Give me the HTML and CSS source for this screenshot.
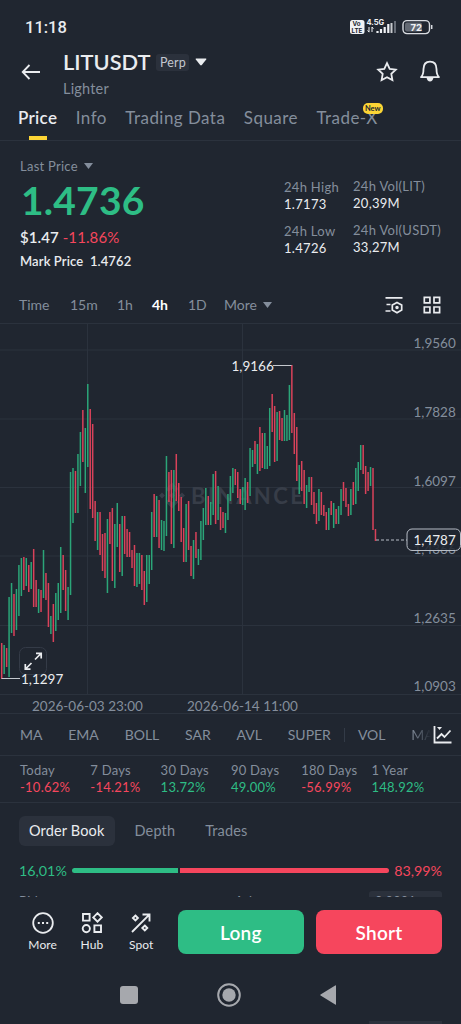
FILE: index.html
```
<!DOCTYPE html>
<html lang="en">
<head>
    <meta charset="UTF-8">
    <title>LITUSDT Perp</title>
    <link rel="stylesheet" href="styles.css">
</head>
<body>
<div class="phone">
    <div class="status">
        <span class="clock">11:18</span>
        <svg class="status-icons" width="86" height="18" viewBox="0 0 86 18">
            <rect x="1" y="2" width="14.500" height="14" rx="2.5" fill="#f0f2f5"/>
            <text x="3.600" y="8.3" class="volte">Vo</text>
            <text x="2.500" y="14.8" class="volte">LTE</text>
            <text x="17.500" y="7.4" class="net">4.5G</text>
            <path d="M20 9v5M18.6 12.4l1.4 1.8M23 14V9M24.4 10.8L23 9" stroke="#f0f2f5" stroke-width="1" fill="none"/>
            <path d="M28.5 15v-2M32 15v-4M35.700 15V9M39.300 15V6" stroke="#f0f2f5" stroke-width="2.200"/>
            <path d="M42.500 15V5" stroke="#f0f2f5" stroke-width="2" opacity=".8"/>
            <path d="M46 15V3" stroke="#666c76" stroke-width="2"/>
            <rect x="54" y="2.600" width="26.500" height="13" rx="4" fill="none" stroke="#d9dce1" stroke-width="1.400"/>
            <rect x="56" y="4.600" width="17" height="9" rx="2" fill="#636973"/>
            <path d="M82.700 7v4" stroke="#d9dce1" stroke-width="1.500"/>
            <text x="61.500" y="12.500" class="batt">72</text>
        </svg>
    </div>

    <div class="header">
        <svg class="back" width="20" height="18" viewBox="0 0 20 18"><path d="M19 9H2M8.500 2L1.700 9l6.800 7" fill="none" stroke="#eaecef" stroke-width="1.800"/></svg>
        <div class="pair">
            <div class="pair-top">
                <h1>LITUSDT</h1>
                <span class="perp">Perp</span>
                <svg width="12" height="8" viewBox="0 0 12 8"><path d="M1.200.5h9.600q1 0 .4.900L6.800 7q-.8.900-1.600 0L.8 1.400Q.2.500 1.200.5z" fill="#eaecef"/></svg>
            </div>
            <div class="pair-name">Lighter</div>
        </div>
        <svg class="star" width="22" height="22" viewBox="0 0 22 22"><path d="M11 2.100l2.700 5.700 6.100.8-4.500 4.300 1.100 6.200L11 16.200l-5.400 2.900 1.100-6.200L2.200 8.600l6.100-.8z" fill="none" stroke="#eaecef" stroke-width="1.800"/></svg>
        <svg class="bell" width="22" height="24" viewBox="0 0 22 24"><path d="M2 18.100h18c-2.400-2-2.500-4-2.500-8 0-4.800-2.500-7.500-6.500-7.500s-6.500 2.700-6.500 7.500c0 4-.1 6-2.500 8z" fill="none" stroke="#eaecef" stroke-width="1.800" stroke-linejoin="round"/><path d="M7.500 18.500q.8 3.900 3.500 3.900t3.500-3.900z" fill="#eaecef"/></svg>
    </div>

    <div class="tabs">
        <span class="current">Price</span>
        <span>Info</span>
        <span>Trading Data</span>
        <span>Square</span>
        <span>Trade-X<i>New</i></span>
    </div>

    <div class="summary">
        <div class="last">
            <div class="label">Last Price <svg width="9" height="6" viewBox="0 0 9 6"><path d="M0 0h9L4.500 6z" fill="#848e9c"/></svg></div>
            <div class="price">1.4736</div>
            <div class="change">$1.47 <span class="down">-11.86%</span></div>
            <div class="mark">Mark Price&nbsp; 1.4762</div>
        </div>
        <div class="stats">
            <div class="col">
                <div>24h High<b>1.7173</b></div>
                <div>24h Low<b>1.4726</b></div>
            </div>
            <div class="col second">
                <div>24h Vol(LIT)<b>20,39M</b></div>
                <div>24h Vol(USDT)<b>33,27M</b></div>
            </div>
        </div>
    </div>

    <div class="intervals">
        <span class="i-time">Time</span>
        <span class="i-15m">15m</span>
        <span class="i-1h">1h</span>
        <span class="i-4h current">4h</span>
        <span class="i-1d">1D</span>
        <span class="i-more">More <svg width="9" height="6" viewBox="0 0 9 6"><path d="M0 0h9L4.500 6z" fill="#848e9c"/></svg></span>
        <svg class="prefs" width="18" height="18" viewBox="0 0 18 18" fill="none" stroke="#eaecef" stroke-width="1.700"><path d="M.5 1.800h17M1.500 8.500h4M.5 15h5"/><path d="M12 6.500l4.700 2.600v5L12 16.700l-4.700-2.600v-5z"/><circle cx="12" cy="11.600" r=".9"/></svg>
        <svg class="grid" width="18" height="18" viewBox="0 0 18 18" fill="none" stroke="#eaecef" stroke-width="1.700"><path d="M1.300 1.300h5.600v5.600H1.300zM11 1.300h5.600v5.600H11zM1.300 11h5.600v5.600H1.300zM11 11h5.600v5.600H11z"/></svg>
    </div>

    <!-- viewBox starts at y=323, the top edge of the chart -->
    <svg id="chart" width="461" height="391" viewBox="0 323 461 391">
        <path class="line" d="M0 323.500h461M0 350h461M0 419h461M0 487.500h461M0 556h461M0 625.500h461M0 694.500h461M0 713.500h461M87.500 323v371M242.500 323v371"/>
        <g class="logo">
            <path d="M172 482.500l6.500 6.500-3 3-3.500-3.500-3.500 3.500-3-3zM162 492.500l3 3-3 3-3-3zM172 492.500l3 3-3 3-3-3zM182 492.500l3 3-3 3-3-3zM172 508.500l6.500-6.500-3-3-3.500 3.500-3.500-3.500-3 3z"/>
            <text x="191" y="504">BINANCE</text>
        </g>
        <g id="candles"></g>
        <g class="axis">
            <text x="413.500" y="347.500">1,9560</text>
            <text x="413.500" y="416.500">1,7828</text>
            <text x="413.500" y="485.500">1,6097</text>
            <text x="413.500" y="554">1,4366</text>
            <text x="413.500" y="623">1,2635</text>
            <text x="413.500" y="691">1,0903</text>
            <text x="32" y="710.500">2026-06-03 23:00</text>
            <text x="187" y="710.500">2026-06-14 11:00</text>
        </g>
        <rect x="19.500" y="647.500" width="27" height="27" rx="6" fill="#202630" stroke="#343b47"/>
        <path d="M35 659.500l6-6M36 653.300h5.200v5.200M31.500 663l-6 6M25.300 664v5.200h5.200" fill="none" stroke="#eaecef" stroke-width="1.700"/>
        <path d="M1.600 678.500H20M273 365.500h18.500" stroke="#c4c8ce"/>
        <text x="21" y="684" class="mark-text">1,1297</text>
        <text x="231.500" y="370.500" class="mark-text">1,9166</text>
        <path d="M376 540h31" stroke="#b7bdc6" stroke-dasharray="3 2"/>
        <rect x="407" y="529" width="53.500" height="21.500" rx="5" fill="#202630" fill-opacity=".85" stroke="#b7bdc6"/>
        <text x="413.500" y="545" class="mark-text">1,4787</text>
    </svg>

    <div class="indicators">
        <span>MA</span><span>EMA</span><span>BOLL</span><span>SAR</span><span>AVL</span><span>SUPER</span><em></em><span>VOL</span><span class="fade">MA</span>
        <svg width="19" height="19" viewBox="0 0 19 19" fill="none" stroke="#eaecef" stroke-width="1.800"><path d="M1.500 1v16.500h17M4 13.500l4.500-4.500 3 3 6-6.500"/><path d="M4 2h5L6.500 5z" fill="#eaecef" stroke="none"/></svg>
    </div>

    <div class="periods">
        <div>Today<b class="down">-10.62%</b></div>
        <div>7 Days<b class="down">-14.21%</b></div>
        <div>30 Days<b class="up">13.72%</b></div>
        <div>90 Days<b class="up">49.00%</b></div>
        <div>180 Days<b class="down">-56.99%</b></div>
        <div>1 Year<b class="up">148.92%</b></div>
    </div>

    <div class="book">
        <div class="book-tabs">
            <span class="current">Order Book</span>
            <span>Depth</span>
            <span>Trades</span>
        </div>
        <div class="ratio">
            <span class="up">16,01%</span>
            <div class="bar buy"></div>
            <div class="bar sell"></div>
            <span class="down">83,99%</span>
        </div>
        <div class="book-head">
            <span>Bid</span>
            <span class="ask">Ask</span>
            <span class="step">0.0001</span>
        </div>
    </div>

    <div class="actions">
        <div class="act">
            <svg width="22" height="22" viewBox="0 0 22 22"><circle cx="11" cy="11" r="9.800" fill="none" stroke="#eaecef" stroke-width="1.800"/><path d="M5.800 10h2v2h-2zM10 10h2v2h-2zM14.200 10h2v2h-2z" fill="#eaecef"/></svg>
            More
        </div>
        <div class="act">
            <svg width="22" height="22" viewBox="0 0 22 22" fill="none" stroke="#eaecef" stroke-width="1.900"><path d="M2 2h6.600v6.600H2zM13.400 13.400H20V20h-6.600zM16.500 1.200l4.200 4.200-4.200 4.200-4.200-4.200z"/><circle cx="5.300" cy="16.600" r="3.600"/></svg>
            Hub
        </div>
        <div class="act">
            <svg width="22" height="22" viewBox="0 0 22 22" fill="none" stroke="#eaecef" stroke-width="1.900"><path d="M2 20L19.300 2.700M12.500 2.500h7v7M5.400 3.500l2.500 2.500-2.500 2.500L2.900 6zM14.800 13.500l2.500 2.500-2.500 2.500-2.500-2.500z"/></svg>
            Spot
        </div>
        <div class="btn long">Long</div>
        <div class="btn short">Short</div>
    </div>

    <div class="nav">
        <svg width="18" height="18"><rect width="18" height="18" rx="3" fill="#a6a8ad"/></svg>
        <svg width="24" height="24"><circle cx="12" cy="12" r="10.800" fill="none" stroke="#a6a8ad" stroke-width="2"/><circle cx="12" cy="12" r="6.700" fill="#a6a8ad"/></svg>
        <svg width="17" height="20"><path d="M16 .8v18.400q0 .8-.8.400L.6 10.500q-.8-.5 0-1L15.200.4q.8-.4.800.4z" fill="#a6a8ad"/></svg>
        <i></i>
    </div>
</div>

<script>
    // direction, high, low (chart y) for each bar, left to right
    var bars = "r643-679 g645-674 r648-667 g597-677 g583-633 r594-636 g589-630 g565-616 g558-596 r557-590 " +
        "g558-586 r565-592 g562-589 r549-607 r580-607 g589-613 r590-612 g550-598 r573-600 r583-627 " +
        "g616-634 r604-642 g593-631 g583-620 g547-613 r555-590 r570-611 g587-620 g472-595 g468-523 " +
        "r471-513 g454-513 g432-486 r410-462 g428-493 g384-467 r409-509 r424-518 r501-541 g512-550 " +
        "r512-555 r534-571 r533-578 g519-593 r512-544 r508-581 g524-588 g503-547 r524-572 g516-576 " +
        "r516-554 r529-557 r532-557 r550-568 r545-586 g553-587 g553-584 r555-590 r571-605 g555-602 " +
        "g555-584 g512-570 r494-537 g496-537 r500-548 g520-550 g521-551 g456-536 r472-502 r470-544 " +
        "g470-548 r454-501 r483-511 r497-542 r528-562 g504-562 r501-550 r546-576 g540-579 r532-558 " +
        "g549-565 g521-560 g508-540 g488-525 r496-525 g502-525 g474-515 r471-524 g486-520 r507-530 " +
        "r512-528 g513-533 g494-520 g476-501 g468-493 r469-485 r472-498 r489-504 g487-505 g478-510 " +
        "r482-503 g448-496 g450-467 r441-464 g444-474 r427-471 r433-468 g433-469 g446-469 g408-466 " +
        "r394-432 r406-462 g412-461 r411-440 r418-441 g410-441 g415-441 g385-440 r365-433 r413-454 " +
        "r427-481 g465-494 r461-491 r470-504 g485-508 g477-492 r477-505 r492-514 r503-524 g489-521 " +
        "r492-515 r505-516 r512-530 g508-530 r501-515 g503-528 r509-524 g506-524 g489-515 r482-501 " +
        "r488-507 r504-516 g489-515 r482-505 g468-504 g462-491 g445-470 r445-474 r466-494 r472-491 " +
        "g467-486 r468-530 r529-541";
    var list = bars.split(" ");
    var up = "", down = "";

    for (var i = 0; i < list.length; i++) {
        var hl = list[i].substr(1).split("-");
        var d = "M" + (1.7 + i * 2.459).toFixed(2) + " " + hl[0] + "V" + hl[1];
        if (list[i].charAt(0) == "g") {
            up += d;
        } else {
            down += d;
        }
    }
    document.getElementById("candles").innerHTML =
        '<path class="c-up" d="' + up + '"/><path class="c-down" d="' + down + '"/>';
</script>
</body>
</html>
```
FILE: styles.css
```
body, h1 {
    margin: 0;
    padding: 0;
}

body {
    background: #202630;
    color: #eaecef;
    font-family: Lato, "Open Sans", sans-serif;
}

svg {
    display: block;
    flex: none;
}

b, i, em {
    font-weight: normal;
    font-style: normal;
}

.phone {
    width: 461px;
    height: 1024px;
    overflow: hidden;
    white-space: nowrap;
}

.up {
    color: #2ebd85;
}

.down {
    color: #f6465d;
}

/* status bar */
.status {
    height: 54px;
    display: flex;
    align-items: center;
    justify-content: space-between;
    padding: 0 26px 0 25px;
    box-sizing: border-box;
}

.clock {
    font-family: Roboto, sans-serif;
    font-size: 16.5px;
    font-weight: 500;
}

.volte {
    font: bold 6.2px Inter, sans-serif;
    fill: #202630;
}

.net {
    font: bold 7.5px Inter, sans-serif;
    fill: #f0f2f5;
}

.batt {
    font: bold 9.5px Inter, sans-serif;
    fill: #f0f2f5;
}

/* header */
.header {
    height: 44px;
    display: flex;
    padding: 0 20px 0 21px;
}

.back {
    margin-top: 9px;
}

.pair {
    margin-left: 22px;
    flex: 1;
    margin-top: -5px;
}

.pair-top {
    display: flex;
    align-items: center;
    height: 26px;
}

h1 {
    font-size: 21.8px;
    line-height: 26px;
    font-weight: 600;
}

.perp {
    width: 33px;
    height: 17px;
    line-height: 17px;
    margin: 0 6px 0 6px;
    border-radius: 3px;
    background: #2b313c;
    text-align: center;
    font-size: 12.5px;
    letter-spacing: 0.2px;
    color: #c3c8d0;
}

.pair-name {
    font-size: 14.5px;
    line-height: 18px;
    margin-top: 5px;
    letter-spacing: 0.2px;
    color: #848e9c;
}

.star {
    margin: 7px 21px 0 0;
}

.bell {
    margin-top: 5px;
}

/* tabs */
.tabs {
    height: 42px;
    display: flex;
    gap: 18.5px;
    padding-left: 18px;
    border-bottom: 1px solid #2b323d;
    font-size: 17px;
    line-height: 40px;
    letter-spacing: 0.45px;
    color: #848e9c;
}

.tabs span {
    position: relative;
}

.tabs .current {
    color: #eaecef;
    font-weight: 600;
    letter-spacing: 0.3px;
}

.tabs .current::after {
    content: "";
    position: absolute;
    left: 11px;
    bottom: 0;
    width: 18px;
    height: 4px;
    background: #fcd535;
}

.tabs i {
    position: absolute;
    right: -5px;
    top: 5px;
    width: 20px;
    height: 11px;
    border-radius: 5px;
    background: #fcd535;
    color: #202630;
    font-size: 7.5px;
    font-weight: bold;
    letter-spacing: 0;
    line-height: 11px;
    text-align: center;
}

/* price summary */
.summary {
    height: 145px;
    display: flex;
    padding-left: 20px;
}

.last {
    width: 264px;
}

.label {
    display: flex;
    align-items: center;
    gap: 6px;
    margin-top: 16px;
    font-size: 13px;
    line-height: 18px;
    letter-spacing: 0.25px;
    color: #848e9c;
}

.price {
    font-size: 39px;
    line-height: 46px;
    margin: 2px 0 0 1px;
    font-weight: bold;
    letter-spacing: 0.2px;
    color: #2ebd85;
}

.change {
    font-size: 15px;
    line-height: 20px;
    margin-top: 4px;
    font-weight: 600;
    letter-spacing: 0.1px;
}

.change .down {
    font-weight: normal;
}

.mark {
    font-size: 13px;
    line-height: 18px;
    margin-top: 5px;
    font-weight: 600;
    letter-spacing: 0.1px;
}

.stats {
    display: flex;
    font-size: 13px;
    line-height: 17px;
    letter-spacing: 0.3px;
    color: #848e9c;
}

.col {
    width: 69px;
    padding-top: 38px;
}

.second {
    padding-top: 37px;
}

.col div {
    margin-bottom: 10px;
}

.stats b {
    display: block;
    color: #eaecef;
}

/* intervals */
.intervals {
    height: 37px;
    display: flex;
    align-items: center;
    padding-left: 19px;
    font-size: 14px;
    color: #848e9c;
}

.intervals .current {
    color: #fff;
    font-weight: bold;
}

.i-time {
    width: 51px;
}

.i-15m {
    width: 47px;
}

.i-1h {
    width: 35px;
}

.i-4h {
    width: 36px;
}

.i-1d {
    width: 36px;
}

.i-more {
    display: flex;
    align-items: center;
    gap: 6px;
    width: 161px;
}

.prefs {
    margin-right: 20px;
}

/* chart */
.line {
    stroke: #2b323d;
    fill: none;
}

.logo {
    fill: #373d48;
}

.logo text {
    font-size: 22px;
    font-weight: bold;
    letter-spacing: 2.4px;
}

.c-up, .c-down {
    stroke-width: 1.5;
    fill: none;
}

.c-up {
    stroke: #2ba578;
}

.c-down {
    stroke: #d9425a;
}

.axis text {
    font-size: 13.5px;
    fill: #848e9c;
}

.mark-text {
    font-size: 13.5px;
    fill: #eaecef;
}

/* indicators */
.indicators {
    height: 42px;
    display: flex;
    align-items: center;
    gap: 25.8px;
    padding-left: 20px;
    border-bottom: 1px solid #2b323d;
    font-size: 14px;
    color: #848e9c;
    box-sizing: border-box;
}

.indicators em {
    width: 1px;
    height: 14px;
    background: #333b47;
    margin: 0 -12.8px;
}

.indicators .fade {
    width: 20px;
    color: transparent;
    background: linear-gradient(to right, #848e9c, #202630);
    background-clip: text;
    -webkit-background-clip: text;
}

.indicators svg {
    margin-left: -24px;
}

/* change by period */
.periods {
    height: 47px;
    display: grid;
    grid-template-columns: repeat(6, 70.3px);
    padding: 6px 0 0 20px;
    border-bottom: 1px solid #2b323d;
    box-sizing: border-box;
    font-size: 13px;
    line-height: 17px;
    letter-spacing: 0.25px;
    color: #848e9c;
}

.periods b {
    display: block;
}

/* order book */
.book {
    height: 94px;
    overflow: hidden;
    padding: 0 19px;
}

.book-tabs {
    display: flex;
    margin-top: 13px;
    font-size: 14.5px;
    line-height: 30px;
    letter-spacing: 0.15px;
    color: #848e9c;
}

.book-tabs span {
    padding: 0 10px;
    margin-right: 10px;
}

.book-tabs .current {
    background: #2b313c;
    border-radius: 6px;
    color: #eaecef;
}

.ratio {
    display: flex;
    align-items: center;
    height: 18px;
    margin-top: 15px;
    font-size: 14.3px;
}

.bar {
    height: 5px;
}

.buy {
    width: 106px;
    margin: 0 2px 0 5px;
    border-radius: 3px 0 0 3px;
    background: #2ebd85;
}

.sell {
    flex: 1;
    margin-right: 5px;
    border-radius: 0 3px 3px 0;
    background: #f6465d;
}

.book-head {
    display: flex;
    margin-top: 12px;
    font-size: 13px;
    line-height: 20px;
    color: #848e9c;
}

.book-head .ask {
    margin-left: 197px;
}

.step {
    width: 73px;
    padding-left: 6px;
    box-sizing: border-box;
    margin-left: auto;
    background: #2b313c;
    border-radius: 3px;
}

/* bottom actions */
.actions {
    height: 69px;
    display: flex;
    align-items: flex-start;
    padding: 0 19px 0 18px;
}

.act {
    width: 49.3px;
    margin-top: 15px;
    display: flex;
    flex-direction: column;
    align-items: center;
    font-size: 12px;
    line-height: 15px;
    letter-spacing: 0.1px;
    gap: 3px;
}

.btn {
    width: 126px;
    height: 44px;
    line-height: 45px;
    margin-top: 13px;
    border-radius: 8px;
    text-align: center;
    font-size: 19px;
    font-weight: 600;
    letter-spacing: 0.3px;
    color: #fff;
}

.long {
    margin-left: 12px;
    background: #2ebd85;
}

.short {
    margin-left: auto;
    background: #f6465d;
}

/* system navigation */
.nav {
    height: 58px;
    display: flex;
    align-items: center;
    padding-left: 120px;
    gap: 79px;
    position: relative;
}

.nav i {
    position: absolute;
    right: 19px;
    bottom: 0;
    width: 73px;
    height: 3px;
    background: #2b313c;
}
```
